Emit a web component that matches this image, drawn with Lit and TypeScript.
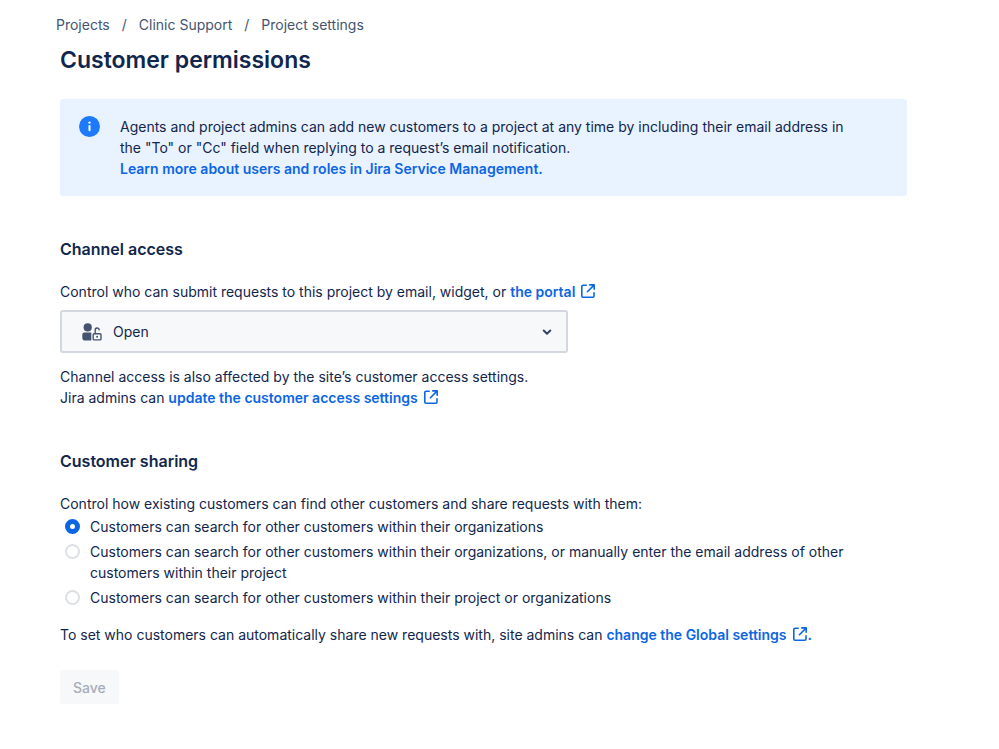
import { LitElement, html, css } from "lit";
import { customElement, state } from "lit/decorators.js";

const externalIcon = html`<svg class="external" viewBox="0 0 16 16" aria-hidden="true">
  <path d="M6.2 2.2H3a1.2 1.2 0 0 0-1.2 1.2V13A1.2 1.2 0 0 0 3 14.2h9.8A1.2 1.2 0 0 0 14 13V9.8M9.8 1.9h4.4v4.4M14 2.1 7.4 8.7" />
</svg>`;

const SHARING_OPTIONS = [
  "Customers can search for other customers within their organizations",
  "Customers can search for other customers within their organizations, or manually enter the email address of other customers within their project",
  "Customers can search for other customers within their project or organizations",
];

@customElement("app-root")
export class AppRoot extends LitElement {
  @state() private sharing = 0;

  static styles = css`
    :host {
      display: block;
      box-sizing: border-box;
      padding: 14px 92px 40px 60px;
      background: #ffffff;
      color: #11264d;
      font: 400 14px/21px Inter, "Liberation Sans", sans-serif;
    }
    * {
      box-sizing: border-box;
    }
    h1,
    h2,
    p,
    ol,
    fieldset {
      margin: 0;
      padding: 0;
      border: 0;
    }
    a {
      color: #0c66e4;
      font-weight: 600;
      text-decoration: none;
    }
    .crumbs {
      display: flex;
      list-style: none;
      margin-left: -4px;
      color: #44546f;
    }
    .crumbs li + li::before {
      content: "/";
      margin: 0 12px;
    }
    .crumbs a {
      color: inherit;
      font-weight: 400;
    }
    h1 {
      margin-top: 11px;
      font-size: 23px;
      line-height: 28px;
      font-weight: 600;
    }
    h2 {
      margin-top: 43px;
      font-size: 16px;
      line-height: 21px;
      font-weight: 600;
    }
    .panel {
      display: flex;
      gap: 20px;
      margin-top: 25px;
      padding: 17px 44px 17px 19px;
      border-radius: 3px;
      background: #e9f2ff;
    }
    .info {
      flex: none;
      width: 21px;
      height: 21px;
    }
    .lead {
      display: block;
      margin-top: 21px;
    }
    .external {
      width: 16px;
      height: 16px;
      margin-left: 5px;
      vertical-align: -2px;
      fill: none;
      stroke: currentColor;
      stroke-width: 1.6;
      stroke-linejoin: round;
      stroke-linecap: round;
    }
    .picker {
      position: relative;
      max-width: 508px;
      margin: 8px 0 13px;
    }
    select {
      appearance: none;
      display: block;
      width: 100%;
      height: 43px;
      padding: 0 40px 0 51px;
      border: 2px solid #d3d7df;
      border-radius: 3px;
      background: #f7f8f9;
      color: inherit;
      font: inherit;
    }
    .person,
    .chevron {
      position: absolute;
      pointer-events: none;
      top: 50%;
      transform: translateY(-50%);
    }
    .person {
      left: 21px;
      width: 22px;
      height: 20px;
    }
    .chevron {
      right: 15px;
      width: 12px;
      height: 12px;
    }
    .option {
      display: flex;
      gap: 10px;
      margin-top: 4px;
      padding: 0 20px 0 5px;
    }
    .lead + .option {
      margin-top: 2px;
    }
    .option input {
      appearance: none;
      flex: none;
      width: 15px;
      height: 15px;
      margin: 3px 0;
      border: 2px solid #dcdfe4;
      border-radius: 50%;
      background: #ffffff;
    }
    .option input:checked {
      border: 5px solid #0c66e4;
    }
    .note {
      margin-top: 16px;
    }
    .save {
      margin-top: 25px;
      height: 34px;
      padding: 0 13px;
      border: 0;
      border-radius: 3px;
      background: #f7f8f9;
      color: #a5adba;
      font: 500 14px/21px Inter, "Liberation Sans", sans-serif;
    }
  `;

  render() {
    return html`
      <nav aria-label="Breadcrumb">
        <ol class="crumbs">
          <li><a href="#projects">Projects</a></li>
          <li><a href="#clinic-support">Clinic Support</a></li>
          <li><a href="#settings">Project settings</a></li>
        </ol>
      </nav>
      <main>
        <h1>Customer permissions</h1>
        <section class="panel">
          <svg class="info" viewBox="0 0 21 21" aria-hidden="true">
            <circle cx="10.5" cy="10.5" r="10.5" fill="#1d7afc" />
            <circle cx="10.5" cy="6.6" r="1.2" fill="#ffffff" />
            <rect x="9.5" y="9" width="2" height="6.2" rx="1" fill="#ffffff" />
          </svg>
          <div>
            <p>
              Agents and project admins can add new customers to a project at any time by including
              their email address in the "To" or "Cc" field when replying to a request’s email
              notification.
            </p>
            <a href="#learn-more">Learn more about users and roles in Jira Service Management.</a>
          </div>
        </section>

        <h2>Channel access</h2>
        <label class="lead" for="channel">
          Control who can submit requests to this project by email, widget, or
          <a href="#portal">the portal${externalIcon}</a>
        </label>
        <div class="picker">
          <select id="channel">
            <option>Open</option>
            <option>Restricted</option>
          </select>
          <svg class="person" viewBox="0 0 22 20" aria-hidden="true">
            <circle cx="6.7" cy="5.4" r="4.1" fill="#44546f" />
            <path
              d="M1.3 12.6a2.1 2.1 0 0 1 2.1-2.1h6.9v8H4.1a2.8 2.8 0 0 1-2.8-2.8z"
              fill="#44546f"
            />
            <g fill="none" stroke="#44546f" stroke-width="1.4">
              <rect x="12.2" y="11.7" width="7.8" height="6.2" rx="1" />
              <path d="M14.2 11.5V8.2a2 2 0 0 1 4-.3" stroke-linecap="round" />
            </g>
            <circle cx="16.1" cy="14.8" r="1" fill="#44546f" />
          </svg>
          <svg class="chevron" viewBox="0 0 12 12" aria-hidden="true">
            <path
              d="M2.7 4.5 6 7.7l3.3-3.2"
              fill="none"
              stroke="#344563"
              stroke-width="2"
              stroke-linecap="round"
              stroke-linejoin="round"
            />
          </svg>
        </div>
        <p>Channel access is also affected by the site’s customer access settings.</p>
        <p>
          Jira admins can
          <a href="#access-settings">update the customer access settings${externalIcon}</a>
        </p>

        <h2>Customer sharing</h2>
        <fieldset aria-labelledby="sharing-label">
          <p class="lead" id="sharing-label">
            Control how existing customers can find other customers and share requests with them:
          </p>
          ${SHARING_OPTIONS.map(
            (text, i) => html`<label class="option">
              <input
                type="radio"
                name="sharing"
                .checked=${this.sharing === i}
                @change=${() => (this.sharing = i)}
              />
              <span>${text}</span>
            </label>`,
          )}
        </fieldset>
        <p class="note">
          To set who customers can automatically share new requests with, site admins can
          <a href="#global-settings">change the Global settings${externalIcon}.</a>
        </p>
        <button class="save" type="button" disabled>Save</button>
      </main>
    `;
  }
}
